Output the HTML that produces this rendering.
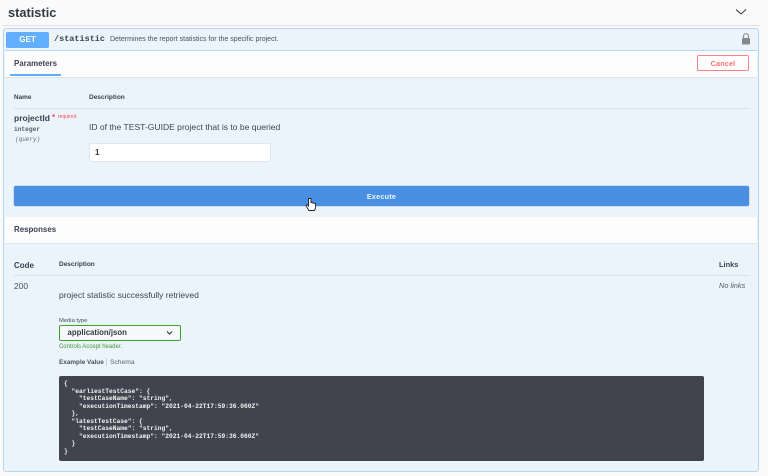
<!DOCTYPE html>
<html><head><meta charset="utf-8">
<style>
html,body{margin:0;padding:0;width:768px;height:476px;overflow:hidden;background:#fafafa;font-family:"Liberation Sans",sans-serif;color:#3b4151}
#w{left:0;top:0;width:768px;height:476px;filter:blur(.3px);overflow:hidden}
div,span{position:absolute;margin:0;white-space:nowrap}
pre{position:absolute;margin:0;white-space:pre}
.b{font-weight:bold}
.m{font-family:"Liberation Mono",monospace}
</style></head><body><div id="w">
<div class="b" style="left:8px;top:4px;font-size:12.8px;line-height:18px;color:#333a44">statistic</div>
<svg style="position:absolute;left:735px;top:8px" width="12" height="8" viewBox="0 0 12 8"><path d="M1 1.5L6 6L11 1.5" fill="none" stroke="#333" stroke-width="1"/></svg>
<div style="left:3px;top:25px;width:757px;height:1px;background:#dedede"></div>

<div style="left:3px;top:28px;width:754px;height:441.5px;border:1.5px solid #b5d5f2;border-radius:3px;background:#ebf3fb"></div>
<div style="left:5px;top:50px;width:752px;height:1px;background:#b5d5f2"></div>
<div style="left:5px;top:51px;width:752px;height:26px;background:#fdfdfe"></div>
<div style="left:5px;top:77px;width:752px;height:1px;background:#dde6f0"></div>
<div style="left:10px;top:74px;width:51px;height:1.5px;background:#61affe"></div>

<div class="b" style="left:6px;top:32px;width:43px;height:16px;background:#61affe;border-radius:2px;color:#fff;font-size:8px;line-height:16px;text-align:center">GET</div>
<div class="m" style="left:54px;top:33px;font-size:8.5px;line-height:12px;font-weight:bold;color:#3b4151">/statistic</div>
<div style="left:110px;top:34px;font-size:7px;line-height:12px;color:#4a5160">Determines the report statistics for the specific project.</div>
<svg style="position:absolute;left:741px;top:33px" width="10" height="12" viewBox="0 0 10 12"><path d="M2.5 5V3.2A2.5 2.5 0 0 1 7.5 3.2V5" fill="none" stroke="#8a8d91" stroke-width="1.2"/><rect x="1" y="5" width="8" height="6.5" rx="1" fill="#85888c"/></svg>

<div class="b" style="left:14px;top:58px;font-size:7.9px;line-height:12px">Parameters</div>
<div class="b" style="left:697px;top:55px;width:50px;height:14px;border:1.3px solid #ff8185;border-radius:2px;background:#fff;color:#ff6a6f;font-size:7.2px;line-height:15.5px;text-align:center;letter-spacing:.2px">Cancel</div>

<div class="b" style="left:14px;top:92px;font-size:6.4px;line-height:12px">Name</div>
<div class="b" style="left:89px;top:92px;font-size:6.5px;line-height:12px">Description</div>
<div style="left:14px;top:108px;width:735px;height:1px;background:#d6dfe9"></div>

<div class="b" style="left:14px;top:112px;font-size:8.5px;line-height:13px">projectId</div>
<div class="b" style="left:52px;top:112px;font-size:8px;line-height:12px;color:#ff4a50">*</div>
<div style="left:58px;top:111px;font-size:5px;line-height:12px;color:#ff4a50">required</div>
<div class="m" style="left:14px;top:124px;font-size:6.2px;line-height:12px;font-weight:bold;color:#555b68">integer</div>
<div class="m" style="left:15px;top:134px;font-size:6px;line-height:12px;font-style:italic;color:#666c78">(query)</div>
<div style="left:89px;top:120px;font-size:8.55px;line-height:14px;color:#3f4654">ID of the TEST-GUIDE project that is to be queried</div>
<div style="left:89px;top:143px;width:182px;height:19px;background:#fff;border:.5px solid #dfe6ee;box-sizing:border-box;border-radius:2px"></div>
<div class="b" style="left:95px;top:146px;font-size:8px;line-height:14px;color:#333a44">1</div>

<div class="b" style="left:14px;top:186px;width:735px;height:20px;background:#4990e2;border-radius:2px;box-shadow:0 0 1px #667;color:#eef4fc;font-size:7.2px;line-height:21.5px;text-align:center;letter-spacing:.25px">Execute</div>
<svg style="position:absolute;left:305px;top:197px" width="12" height="16" viewBox="0 0 12 16"><path d="M3.5 1.5V9L2 7.6L1 8.6L4 13.5H9.5L10.5 11V6.5L6 5.5V1.5Z" fill="#fff" stroke="#222" stroke-width=".9"/></svg>

<div style="left:5px;top:217px;width:752px;height:26px;background:#fdfdfe"></div>
<div style="left:5px;top:243px;width:752px;height:1px;background:#dde6f0"></div>
<div class="b" style="left:14px;top:223px;font-size:7.9px;line-height:13px">Responses</div>

<div class="b" style="left:14px;top:259px;font-size:8px;line-height:13px">Code</div>
<div class="b" style="left:59px;top:258px;font-size:6.5px;line-height:13px">Description</div>
<div class="b" style="left:719px;top:258px;font-size:7.4px;line-height:13px">Links</div>
<div style="left:14px;top:275px;width:735px;height:1px;background:#d6dfe9"></div>

<div style="left:14px;top:279px;font-size:8.4px;line-height:14px;color:#4a5160">200</div>
<div style="left:59px;top:288px;font-size:8.5px;line-height:14px;color:#3f4654">project statistic successfully retrieved</div>
<div style="left:719px;top:279px;font-size:7.4px;line-height:14px;font-style:italic;color:#555b68">No links</div>

<div style="left:59px;top:315px;font-size:5.8px;line-height:12px;color:#444b58">Media type</div>
<div class="b" style="left:59px;top:325px;width:122px;height:16px;box-sizing:border-box;border:1.3px solid #41a02f;border-radius:2px;background:#f7f8f9;font-size:7.8px;line-height:13.5px;padding-left:7.5px;color:#333a44">application/json</div>
<svg style="position:absolute;left:166px;top:330px" width="7" height="6" viewBox="0 0 7 6"><path d="M1 1.5L3.5 4L6 1.5" fill="none" stroke="#333" stroke-width="1.1"/></svg>
<div style="left:59px;top:341px;font-size:5.95px;line-height:12px;color:#3f9a35">Controls Accept header.</div>

<div class="b" style="left:59px;top:357px;font-size:6.4px;line-height:12px;color:#4a5160">Example Value</div>
<div style="left:106px;top:358px;width:1px;height:8px;background:#ccd3dc"></div>
<div style="left:110px;top:357px;font-size:6.7px;line-height:12px;color:#5c6370">Schema</div>

<div style="left:59px;top:376px;width:645px;height:84.5px;background:#41444e;border-radius:2px"></div>
<pre class="m" style="left:64px;top:380px;font-size:6.25px;line-height:7.55px;color:#f2f2f2;font-weight:bold">{
  "earliestTestCase": {
    "testCaseName": "string",
    "executionTimestamp": "2021-04-22T17:59:36.060Z"
  },
  "latestTestCase": {
    "testCaseName": "string",
    "executionTimestamp": "2021-04-22T17:59:36.060Z"
  }
}</pre>
</div></body></html>
